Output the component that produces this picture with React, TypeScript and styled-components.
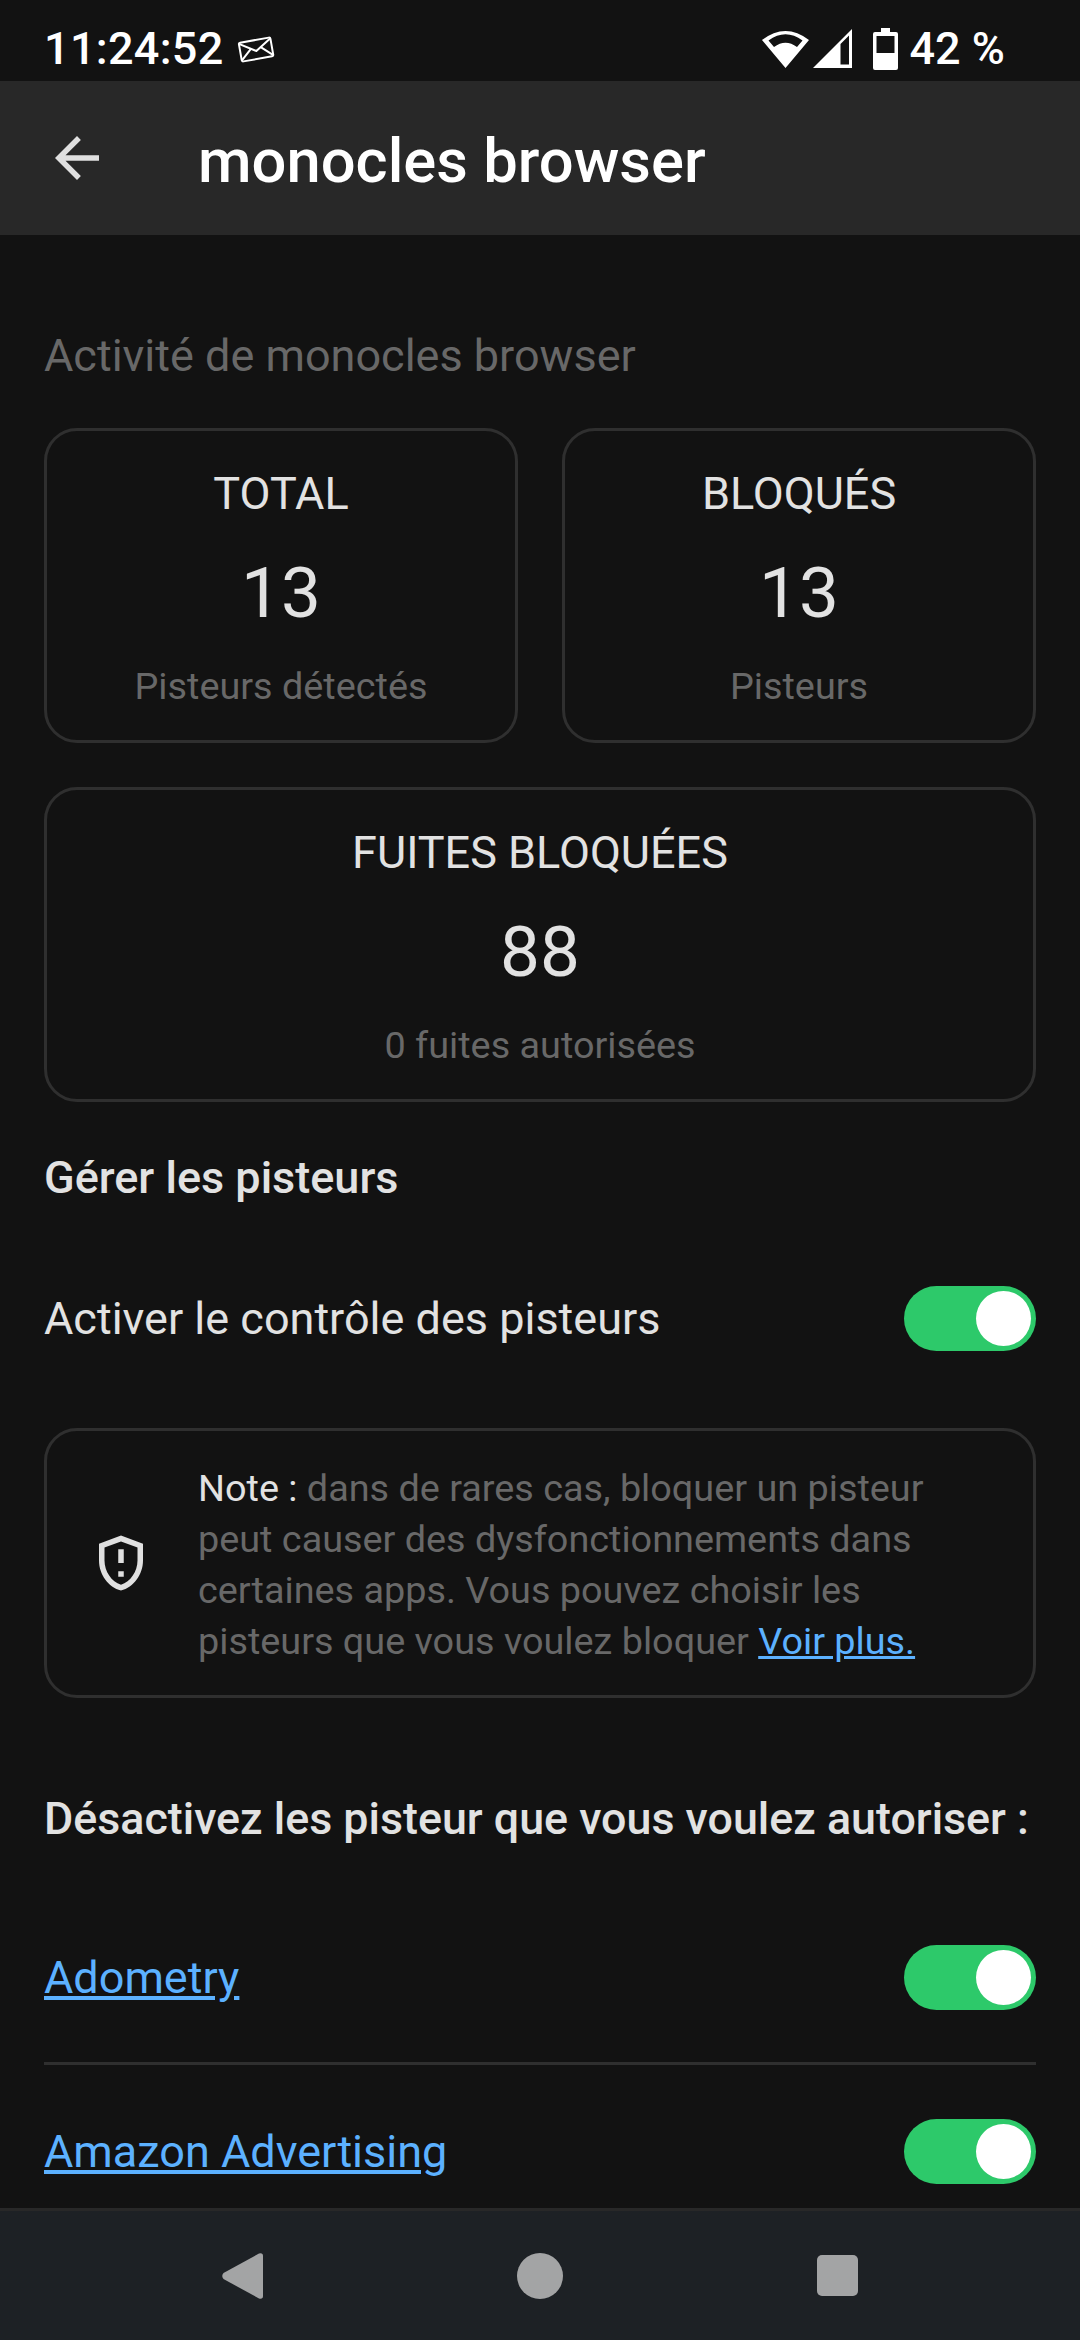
import * as React from 'react';
import styled, { createGlobalStyle } from 'styled-components';

const GlobalStyle = createGlobalStyle`
  html, body {
    margin: 0;
    padding: 0;
    background: #121212;
  }
  body {
    font-family: Roboto, "Noto Sans", sans-serif;
  }
`;

const stats = [
  { title: 'TOTAL', value: '13', caption: 'Pisteurs détectés' },
  { title: 'BLOQUÉS', value: '13', caption: 'Pisteurs' },
];

const Toggle: React.FC = () => (
  <Track>
    <Knob />
  </Track>
);

const StatCard: React.FC<{ title: string; value: string; caption: string }> = ({ title, value, caption }) => (
  <Card>
    <CardTitle>{title}</CardTitle>
    <CardValue>{value}</CardValue>
    <CardCaption>{caption}</CardCaption>
  </Card>
);

const App: React.FC = () => {
  return (
    <Screen>
      <GlobalStyle />
      <StatusBar>
        <StatusLeft>
          <Clock>11:24:52</Clock>
          <svg width="38" height="32" viewBox="0 0 38 32" fill="none" stroke="#fff" strokeWidth="2" strokeLinejoin="round">
            <g transform="rotate(-10 19 16)">
              <rect x="3" y="7" width="32" height="19" rx="1.5" />
              <path d="M3 8l16 10 16-10" />
              <path d="M3 25l11-10M35 25L24 15" />
            </g>
          </svg>
        </StatusLeft>
        <StatusRight>
          <svg width="47" height="39" viewBox="0 0 47 39">
            <path fill="#fff" fillRule="evenodd" d="M0 11Q23.5 -7 47 11L23.5 39ZM6.5 11.5L12 18Q23.5 9.500 35 18L40.500 11.500Q23.500 -1 6.500 11.500Z" />
          </svg>
          <SignalIcon width="39" height="39" viewBox="0 0 39 39">
            <path fill="#fff" fillRule="evenodd" d="M0 39L39 0V39ZM27.500 15V35.500H36V6.500Z" />
          </SignalIcon>
          <BatteryIcon width="25" height="42" viewBox="0 0 25 42">
            <path fill="#fff" fillRule="evenodd" d="M8 0H17V4H23Q25 4 25 6V40Q25 42 23 42H2Q0 42 0 40V6Q0 4 2 4H8ZM3.500 8V25H21.500V8Z" />
          </BatteryIcon>
          <Battery>42 %</Battery>
        </StatusRight>
      </StatusBar>
      <AppBar>
        <BackIcon width="66" height="66" viewBox="0 0 24 24">
          <path fill="#e0e0e0" d="M20 11H7.830l5.590-5.590L12 4l-8 8 8 8 1.410-1.410L7.830 13H20v-2z" />
        </BackIcon>
        <AppTitle>monocles browser</AppTitle>
      </AppBar>
      <Content>
        <SectionLabel>Activité de monocles browser</SectionLabel>
        <CardRow>
          {stats.map((stat) => (
            <StatCard key={stat.title} {...stat} />
          ))}
        </CardRow>
        <WideCard>
          <CardTitle>FUITES BLOQUÉES</CardTitle>
          <CardValue>88</CardValue>
          <CardCaption>0 fuites autorisées</CardCaption>
        </WideCard>
        <Heading>Gérer les pisteurs</Heading>
        <SwitchRow>
          <RowLabel>Activer le contrôle des pisteurs</RowLabel>
          <Toggle />
        </SwitchRow>
        <NoteCard>
          <NoteIcon width="66" height="66" viewBox="0 0 24 24">
            <path fill="#e0e0e0" d="M12 2L4 5v6.090c0 5.050 3.410 9.760 8 10.910 4.590-1.150 8-5.860 8-10.910V5l-8-3zm6 9.090c0 4-2.550 7.700-6 8.830-3.450-1.130-6-4.820-6-8.830v-4.700l6-2.250 6 2.250v4.700zM11 15h2v2h-2zM11 7h2v5h-2z" />
          </NoteIcon>
          <NoteText>
            <NoteLead>Note : </NoteLead>
            dans de rares cas, bloquer un pisteur peut causer des dysfonctionnements dans certaines apps. Vous pouvez
            choisir les pisteurs que vous voulez bloquer <TrackerLink>Voir plus.</TrackerLink>
          </NoteText>
        </NoteCard>
        <AllowHeading>Désactivez les pisteur que vous voulez autoriser :</AllowHeading>
        <TrackerRow>
          <TrackerLink>Adometry</TrackerLink>
          <Toggle />
        </TrackerRow>
        <Divider />
        <TrackerRow>
          <TrackerLink>Amazon Advertising</TrackerLink>
          <Toggle />
        </TrackerRow>
      </Content>
      <NavBar>
        <svg width="41" height="46" viewBox="0 0 41 46">
          <path fill="#a3a4a5" d="M37 0.500Q41 -0.500 41 3V43Q41 46.500 37 45.500L1.500 26Q-1 23 1.500 20Z" />
        </svg>
        <HomeDot />
        <RecentSquare />
      </NavBar>
    </Screen>
  );
};

const Screen = styled.div`
  width: 1080px;
  height: 2340px;
  display: flex;
  flex-direction: column;
  overflow: hidden;
  background: #121212;
  color: #e2e2e2;
`;

const StatusBar = styled.div`
  height: 81px;
  flex: none;
  box-sizing: border-box;
  display: flex;
  align-items: center;
  justify-content: space-between;
  padding: 16px 75px 0 44px;
`;

const StatusLeft = styled.div`
  display: flex;
  align-items: center;
  gap: 13px;
`;

const StatusRight = styled.div`
  display: flex;
  align-items: center;
`;

const Clock = styled.span`
  font-size: 45px;
  font-weight: 500;
  color: #fff;
  letter-spacing: 0.3px;
`;

const SignalIcon = styled.svg`
  margin-left: 4px;
`;

const BatteryIcon = styled.svg`
  margin-left: 21px;
`;

const Battery = styled.span`
  margin-left: 12px;
  font-size: 45px;
  font-weight: 500;
  color: #fff;
`;

const AppBar = styled.div`
  height: 154px;
  flex: none;
  display: flex;
  align-items: center;
  background: #282828;
  padding-left: 44px;
`;

const BackIcon = styled.svg`
  flex: none;
`;

const AppTitle = styled.h1`
  margin: 0 0 0 88px;
  padding-top: 5px;
  font-size: 61.500px;
  font-weight: 500;
  color: #fff;
`;

const Content = styled.main`
  flex: 1;
  min-height: 0;
  overflow: hidden;
  padding: 0 44px;
`;

const SectionLabel = styled.div`
  margin-top: 95px;
  height: 52px;
  line-height: 52px;
  font-size: 45px;
  color: #686868;
`;

const CardRow = styled.div`
  margin-top: 46px;
  display: grid;
  grid-template-columns: 1fr 1fr;
  gap: 44px;
`;

const Card = styled.section`
  height: 315px;
  box-sizing: border-box;
  border: 3px solid #2f2f2f;
  border-radius: 33px;
  display: flex;
  flex-direction: column;
  align-items: center;
  padding-top: 37px;
`;

const WideCard = styled(Card)`
  margin-top: 44px;
`;

const CardTitle = styled.div`
  height: 52px;
  line-height: 52px;
  font-size: 45px;
  color: #e2e2e2;
`;

const CardValue = styled.div`
  margin-top: 31px;
  height: 84px;
  line-height: 84px;
  font-size: 71px;
  color: #e2e2e2;
`;

const CardCaption = styled.div`
  margin-top: 25px;
  height: 52px;
  line-height: 52px;
  font-size: 37.800px;
  color: #686868;
`;

const Heading = styled.h2`
  margin: 50px 0 0;
  height: 52px;
  line-height: 52px;
  font-size: 45px;
  font-weight: 500;
  color: #e2e2e2;
`;

const SwitchRow = styled.div`
  margin-top: 82px;
  height: 65px;
  display: flex;
  align-items: center;
  justify-content: space-between;
`;

const RowLabel = styled.span`
  font-size: 45px;
  color: #e2e2e2;
`;

const Track = styled.div`
  width: 132px;
  height: 65px;
  flex: none;
  box-sizing: border-box;
  padding: 5px;
  border-radius: 33px;
  background: #2dc96a;
  display: flex;
  justify-content: flex-end;
`;

const Knob = styled.div`
  width: 55px;
  height: 55px;
  border-radius: 50%;
  background: #fff;
`;

const NoteCard = styled.section`
  margin-top: 77px;
  height: 270px;
  box-sizing: border-box;
  border: 3px solid #2f2f2f;
  border-radius: 33px;
  display: flex;
  align-items: center;
  padding: 0 20px 0 41px;
`;

const NoteIcon = styled.svg`
  flex: none;
`;

const NoteText = styled.p`
  margin: 0 0 0 44px;
  padding-top: 3px;
  max-width: 770px;
  font-size: 37.800px;
  line-height: 51px;
  color: #686868;
`;

const NoteLead = styled.span`
  color: #e2e2e2;
`;

const TrackerLink = styled.a`
  color: #5cb1ff;
  text-decoration: underline;
`;

const AllowHeading = styled(Heading)`
  margin-top: 95px;
  margin-bottom: 100px;
  font-size: 44.800px;
  white-space: nowrap;
`;

const TrackerRow = styled.div`
  margin-top: 52px;
  height: 65px;
  display: flex;
  align-items: center;
  justify-content: space-between;
  font-size: 45px;
`;

const Divider = styled.div`
  margin-top: 52px;
  margin-bottom: 54px;
  height: 3px;
  background: #2f2f2f;
`;

const NavBar = styled.nav`
  height: 132px;
  flex: none;
  box-sizing: border-box;
  border-top: 3px solid #282828;
  background: #1d2125;
  display: flex;
  align-items: center;
  padding: 0 222px;
  justify-content: space-between;
`;

const HomeDot = styled.div`
  width: 46px;
  height: 46px;
  border-radius: 50%;
  background: #a3a4a5;
`;

const RecentSquare = styled.div`
  width: 41px;
  height: 41px;
  border-radius: 5px;
  background: #a3a4a5;
`;

export default App;
